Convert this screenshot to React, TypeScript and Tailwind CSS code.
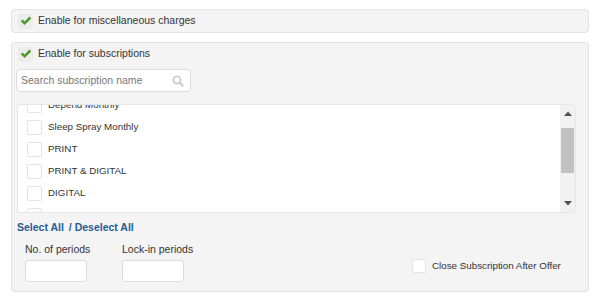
const items = [
  "Depend Monthly",
  "Sleep Spray Monthly",
  "PRINT",
  "PRINT & DIGITAL",
  "DIGITAL",
  "",
];

function CheckedBox() {
  return (
    <span className="flex h-[15px] w-[15px] shrink-0 items-center justify-center rounded-[2px] bg-[#ececec]">
      <svg width="12" height="10" viewBox="0 0 12 10">
        <path
          d="M0.8 5.2 L2.6 3.4 L4.6 5.4 L9.4 0.6 L11.2 2.4 L4.6 9 Z"
          fill="#4e9a2b"
        />
      </svg>
    </span>
  );
}

function EmptyBox() {
  return (
    <span className="block h-[15px] w-[15px] shrink-0 rounded-[2px] border border-[#e3e3e3] bg-white" />
  );
}

function Field({ label, width }: { label: string; width: string }) {
  return (
    <div className={`flex flex-col ${width}`}>
      <span className="h-[14px] text-[10.5px] leading-[14px] text-[#333]">{label}</span>
      <input
        type="text"
        className="mt-[4px] h-[22px] w-[62px] rounded-[3px] border border-[#dcdcdc] bg-white outline-none"
      />
    </div>
  );
}

export default function App() {
  return (
    <div className="h-[300px] w-[600px] bg-white px-[11px] pt-[9px] font-['Liberation_Sans',Arial,sans-serif]">
      <div className="flex h-[24px] items-center gap-[5px] rounded-[4px] border border-[#e2e2e2] bg-[#f4f4f4] pl-[6px]">
        <CheckedBox />
        <span className="text-[10.5px] text-[#333]">Enable for miscellaneous charges</span>
      </div>

      <div className="mt-[9px] flex h-[250px] flex-col rounded-[4px] border border-[#e2e2e2] bg-[#f4f4f4]">
        <div className="flex h-[22px] items-center gap-[5px] pl-[6px]">
          <CheckedBox />
          <span className="text-[10.5px] text-[#333]">Enable for subscriptions</span>
        </div>

        <div className="ml-[4px] mt-[4px] flex h-[23px] w-[175px] items-center justify-between rounded-[4px] border border-[#dcdcdc] bg-white pl-[4px] pr-[6px]">
          <span className="text-[10.5px] text-[#777]">Search subscription name</span>
          <svg width="12" height="12" viewBox="0 0 12 12">
            <circle cx="5" cy="5" r="3.6" fill="none" stroke="#cccccc" strokeWidth="1.8" />
            <path d="M7.6 7.6 L10.6 10.6" stroke="#cccccc" strokeWidth="2.2" strokeLinecap="round" />
          </svg>
        </div>

        <div className="ml-[5px] mr-[12px] mt-[12px] flex h-[109px] rounded-[3px] border border-[#e6e6e6] bg-white">
          <div className="flex-1 overflow-hidden">
            <div className="-mt-[11px]">
              {items.map((item, i) => (
                <div key={i} className="flex h-[22px] items-center gap-[6px] pl-[9px]">
                  <EmptyBox />
                  <span className="text-[9.8px] text-[#333]">{item}</span>
                </div>
              ))}
            </div>
          </div>
          <div className="flex w-[15px] flex-col bg-[#f1f1f1]">
            <div className="flex h-[17px] items-center justify-center">
              <svg width="8" height="5" viewBox="0 0 8 5">
                <path d="M0 5 L4 0.5 L8 5 Z" fill="#505050" />
              </svg>
            </div>
            <div className="flex-1">
              <div className="mx-[1px] mt-[6px] h-[45px] bg-[#c1c1c1]" />
            </div>
            <div className="flex h-[17px] items-center justify-center">
              <svg width="8" height="5" viewBox="0 0 8 5">
                <path d="M0 0 L4 4.5 L8 0 Z" fill="#505050" />
              </svg>
            </div>
          </div>
        </div>

        <div className="ml-[5px] mt-[7px] h-[14px] text-[10.5px] font-bold leading-[14px] text-[#245c93]">
          Select All <span className="ml-[2px]">/</span> Deselect All
        </div>

        <div className="mt-[8px] flex items-start pl-[13px]">
          <Field label="No. of periods" width="w-[97px]" />
          <Field label="Lock-in periods" width="w-[290px]" />
          <div className="mt-[17px] flex items-center gap-[6px]">
            <span className="block h-[14px] w-[14px] rounded-[2px] border border-[#e3e3e3] bg-white" />
            <span className="text-[9.8px] text-[#333]">Close Subscription After Offer</span>
          </div>
        </div>
      </div>
    </div>
  );
}
